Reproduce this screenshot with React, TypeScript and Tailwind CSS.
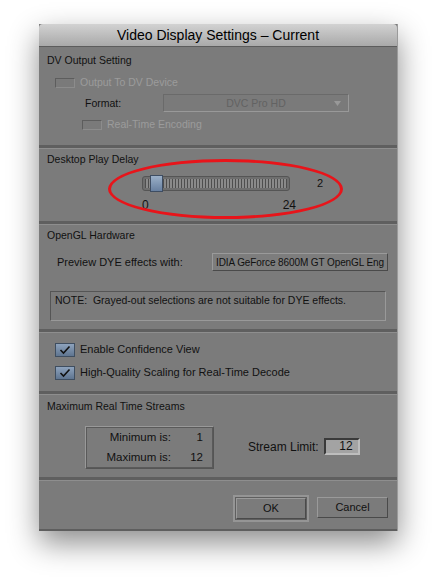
import React from "react";

const font = { fontFamily: '"Liberation Sans", Arial, sans-serif' };

function Sep() {
  return <div className="h-[4px] border-t-[3px] border-t-[#5f5f5f] border-b border-b-[#8e8e8e] bg-[#666]" />;
}

function Check({ checked, disabled }: { checked?: boolean; disabled?: boolean }) {
  if (checked) {
    return (
      <div className="w-[20px] h-[14px] bg-gradient-to-b from-[#8ea3bd] to-[#5f7590] border border-[#3f4e60] flex items-center justify-center">
        <svg width="12" height="10" viewBox="0 0 12 10">
          <path d="M1.5 5 L4.5 8 L10.5 1.5" fill="none" stroke="#111" strokeWidth="1.6" />
        </svg>
      </div>
    );
  }
  return (
    <div
      className={
        "w-[20px] h-[10px] border bg-[#7a7a7a] " +
        (disabled ? "border-t-[#5d5d5d] border-l-[#5d5d5d] border-r-[#8c8c8c] border-b-[#8c8c8c]" : "border-[#444]")
      }
    />
  );
}

export default function App() {
  return (
    <div className="w-[437px] h-[587px] bg-white relative pt-[24px] pl-[39px]" style={font}>
      <div className="w-[359px] bg-[#7b7b7b] shadow-[0_12px_28px_rgba(0,0,0,0.45)] border-r border-r-[#9a9a9a] text-[10.5px] leading-[15px] text-[#111] relative">
        {/* Title */}
        <div className="h-[23px] bg-gradient-to-b from-[#d2d2d2] to-[#a9a9a9] border-b border-b-[#5c5c5c] flex items-center justify-center text-[14px] text-black rounded-t-[4px]">
          Video Display Settings – Current
        </div>

        {/* DV Output */}
        <div className="h-[98px] px-[8px] pt-[6px]">
          <div>DV Output Setting</div>
          <div className="flex items-center gap-[5px] mt-[7px] ml-[8px] text-[#9c9c9c]">
            <Check disabled />
            <span>Output To DV Device</span>
          </div>
          <div className="flex items-center mt-[4px] ml-[38px]">
            <span className="w-[78px]">Format:</span>
            <div className="w-[186px] h-[18px] border border-t-[#6a6a6a] border-l-[#6a6a6a] border-r-[#999] border-b-[#999] bg-[#7a7a7a] flex items-center justify-center relative text-[#626262]">
              DVC Pro HD
              <svg className="absolute right-[7px] top-[6px]" width="7" height="6" viewBox="0 0 7 6">
                <path d="M0 0 L7 0 L3.5 5 Z" fill="#999" />
              </svg>
            </div>
          </div>
          <div className="flex items-center gap-[5px] mt-[5px] ml-[35px] text-[#9c9c9c]">
            <Check disabled />
            <span>Real-Time Encoding</span>
          </div>
        </div>
        <Sep />

        {/* Desktop Play Delay */}
        <div className="h-[72px] px-[8px] pt-[3px] relative">
          <div>Desktop Play Delay</div>
          <div className="flex items-center ml-[95px] mt-[9px]">
            <div className="relative w-[148px] h-[15px] rounded-[3px] border border-[#555] bg-[#6e6e6e] p-[2px]">
              <div className="w-full h-full bg-[repeating-linear-gradient(90deg,#4e4e4e_0_1px,#8a8a8a_1px_3px)]" />
              <div className="absolute left-[7px] top-[-2px] w-[13px] h-[17px] bg-gradient-to-b from-[#9bb0c8] to-[#6880a0] border border-[#3e4d62]" />
            </div>
            <span className="ml-[27px] text-[11px]">2</span>
          </div>
          <div className="flex ml-[95px] mt-[7px] w-[154px] justify-between text-[12px]">
            <span>0</span>
            <span>24</span>
          </div>
        </div>
        <Sep />

        {/* OpenGL */}
        <div className="h-[104px] px-[8px] pt-[3px]">
          <div>OpenGL Hardware</div>
          <div className="flex items-center mt-[10px] ml-[10px]">
            <span className="w-[155px] text-[11px]">Preview DYE effects with:</span>
            <div className="w-[176px] h-[18px] border border-t-[#9a9a9a] border-l-[#9a9a9a] border-r-[#4a4a4a] border-b-[#4a4a4a] bg-[#7d7d7d] whitespace-nowrap flex items-center justify-center text-[10px] tracking-[-0.1px]">
              IDIA GeForce 8600M GT OpenGL Eng
            </div>
          </div>
          <div className="mt-[20px] ml-[3px] w-[336px] h-[30px] border border-t-[#555] border-l-[#555] border-r-[#999] border-b-[#999] px-[4px] pt-[1px]">
            NOTE:&nbsp; Grayed-out selections are not suitable for DYE effects.
          </div>
        </div>
        <Sep />

        {/* Checkboxes */}
        <div className="h-[58px] px-[16px] pt-[9px] flex flex-col gap-[8px] text-[11px]">
          <div className="flex items-center gap-[5px]">
            <Check checked />
            <span>Enable Confidence View</span>
          </div>
          <div className="flex items-center gap-[5px]">
            <Check checked />
            <span>High-Quality Scaling for Real-Time Decode</span>
          </div>
        </div>
        <Sep />

        {/* Max Real Time Streams */}
        <div className="h-[82px] px-[8px] pt-[4px]">
          <div>Maximum Real Time Streams</div>
          <div className="flex items-center mt-[12px]">
            <div className="ml-[38px] w-[129px] h-[43px] border border-t-[#999] border-l-[#999] border-r-[#555] border-b-[#555] outline outline-1 outline-[#5a5a5a] -outline-offset-2 flex flex-col justify-center gap-[5px] text-[11.5px]">
              <div className="flex">
                <span className="w-[85px] text-right">Minimum is:</span>
                <span className="w-[32px] text-right">1</span>
              </div>
              <div className="flex">
                <span className="w-[85px] text-right">Maximum is:</span>
                <span className="w-[32px] text-right">12</span>
              </div>
            </div>
            <span className="ml-[34px] text-[12px]">Stream Limit:</span>
            <div className="ml-[5px] -mt-[2px] w-[36px] h-[17px] bg-[#a3a3a3] border-[2px] border-t-[#3a3a3a] border-l-[#3a3a3a] border-r-[#bdbdbd] border-b-[#bdbdbd] text-right pr-[5px] leading-[13px] text-[12px]">
              12
            </div>
          </div>
        </div>
        <Sep />

        {/* Buttons */}
        <div className="h-[50px] flex items-start justify-end pt-[16px] pr-[9px] gap-[8px] border-b-[2px] border-b-[#5e5e5e] text-[11px]">
          <div className="w-[76px] h-[27px] border-[2px] border-[#959595] bg-[#5f5f5f] p-[1px] -mt-[2px]">
            <div className="w-full h-full bg-[#7b7b7b] border border-t-[#9a9a9a] border-l-[#9a9a9a] border-r-[#4a4a4a] border-b-[#4a4a4a] flex items-center justify-center">
              OK
            </div>
          </div>
          <div className="w-[71px] h-[21px] bg-[#7b7b7b] border border-t-[#9a9a9a] border-l-[#9a9a9a] border-r-[#4a4a4a] border-b-[#4a4a4a] flex items-center justify-center">
            Cancel
          </div>
        </div>

        {/* Red ellipse annotation */}
        <div className="absolute left-[69px] top-[135px] w-[235px] h-[60px] rounded-[50%] border-[3px] border-[#e8141a] pointer-events-none" />
      </div>
    </div>
  );
}
